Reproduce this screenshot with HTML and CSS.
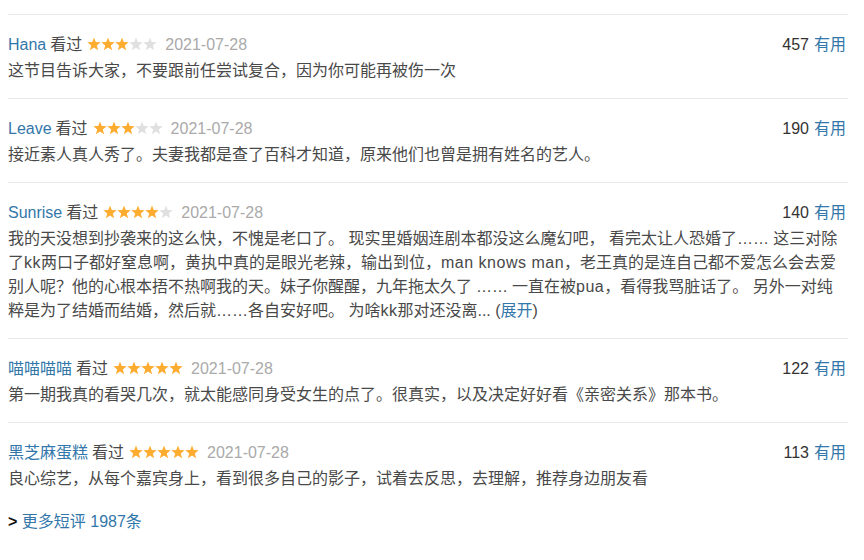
FILE: index.html
```html
<!DOCTYPE html>
<html lang="zh-CN">
<head>
<meta charset="utf-8">
<title>短评</title>
<link rel="stylesheet" href="styles.css">
</head>
<body>
<svg width="0" height="0" class="defs">
  <defs>
    <polygon id="st" points="7,0.5 8.75,5.1 13.66,5.34 9.8,8.45 11.11,13.3 7,10.55 2.89,13.3 4.2,8.45 0.34,5.34 5.25,5.1"/>
  </defs>
</svg>
<div class="comments">
  <div class="item">
    <div class="head">
      <div class="info">
        <a class="name">Hana</a><span class="seen">看过</span>
        <svg class="stars" viewBox="0 0 70 14"><use href="#st" class="on"/><use href="#st" x="14" class="on"/><use href="#st" x="28" class="on"/><use href="#st" x="42" class="off"/><use href="#st" x="56" class="off"/></svg>
        <span class="date">2021-07-28</span>
      </div>
      <div class="vote"><span class="num">457</span><a class="useful">有用</a></div>
    </div>
    <p class="text">这节目告诉大家，不要跟前任尝试复合，因为你可能再被伤一次</p>
  </div>
  <div class="item">
    <div class="head">
      <div class="info">
        <a class="name">Leave</a><span class="seen">看过</span>
        <svg class="stars" viewBox="0 0 70 14"><use href="#st" class="on"/><use href="#st" x="14" class="on"/><use href="#st" x="28" class="on"/><use href="#st" x="42" class="off"/><use href="#st" x="56" class="off"/></svg>
        <span class="date">2021-07-28</span>
      </div>
      <div class="vote"><span class="num">190</span><a class="useful">有用</a></div>
    </div>
    <p class="text">接近素人真人秀了。夫妻我都是查了百科才知道，原来他们也曾是拥有姓名的艺人。</p>
  </div>
  <div class="item">
    <div class="head">
      <div class="info">
        <a class="name">Sunrise</a><span class="seen">看过</span>
        <svg class="stars" viewBox="0 0 70 14"><use href="#st" class="on"/><use href="#st" x="14" class="on"/><use href="#st" x="28" class="on"/><use href="#st" x="42" class="on"/><use href="#st" x="56" class="off"/></svg>
        <span class="date">2021-07-28</span>
      </div>
      <div class="vote"><span class="num">140</span><a class="useful">有用</a></div>
    </div>
    <p class="text">我的天没想到抄袭来的这么快，不愧是老口了。 现实里婚姻连剧本都没这么魔幻吧， 看完太让人恐婚了…… 这三对除了<span class="lat">kk</span>两口子都好窒息啊，黄执中真的是眼光老辣，输出到位，<span class="lat">man knows man</span>，老王真的是连自己都不爱怎么会去爱别人呢？他的心根本捂不热啊我的天。妹子你醒醒，九年拖太久了<span class="dots">……</span>一直在被<span class="lat">pua</span>，看得我骂脏话了。 另外一对纯粹是为了结婚而结婚，然后就……各自安好吧。 为啥<span class="lat">kk</span>那对还没离... (<a class="more">展开</a>)</p>
  </div>
  <div class="item">
    <div class="head">
      <div class="info">
        <a class="name">喵喵喵喵</a><span class="seen">看过</span>
        <svg class="stars" viewBox="0 0 70 14"><use href="#st" class="on"/><use href="#st" x="14" class="on"/><use href="#st" x="28" class="on"/><use href="#st" x="42" class="on"/><use href="#st" x="56" class="on"/></svg>
        <span class="date">2021-07-28</span>
      </div>
      <div class="vote"><span class="num">122</span><a class="useful">有用</a></div>
    </div>
    <p class="text">第一期我真的看哭几次，就太能感同身受女生的点了。很真实，以及决定好好看《亲密关系》那本书。</p>
  </div>
  <div class="item last">
    <div class="head">
      <div class="info">
        <a class="name">黑芝麻蛋糕</a><span class="seen">看过</span>
        <svg class="stars" viewBox="0 0 70 14"><use href="#st" class="on"/><use href="#st" x="14" class="on"/><use href="#st" x="28" class="on"/><use href="#st" x="42" class="on"/><use href="#st" x="56" class="on"/></svg>
        <span class="date">2021-07-28</span>
      </div>
      <div class="vote"><span class="num">113</span><a class="useful">有用</a></div>
    </div>
    <p class="text">良心综艺，从每个嘉宾身上，看到很多自己的影子，试着去反思，去理解，推荐身边朋友看</p>
  </div>
  <div class="all"><span class="gt">&gt;</span> <a class="link">更多短评 1987条</a></div>
</div>
</body>
</html>
```
FILE: styles.css
```css
html, body {
  margin: 0;
  padding: 0;
  background: #fff;
}
body {
  font-family: "Liberation Sans", "Noto Sans CJK SC", sans-serif;
  color: #494949;
  font-size: 16px;
}
.defs {
  position: absolute;
  width: 0;
  height: 0;
}
.comments {
  margin: 14px 16px 0 8px;
}
.item {
  border-top: 1px solid #e9e9e9;
  padding: 18px 2px 15px 0;
}
.item.last {
  padding-bottom: 0;
}
.head {
  display: flex;
  justify-content: space-between;
  align-items: center;
  height: 24px;
  line-height: 24px;
  font-size: 16px;
}
.info {
  display: flex;
  align-items: center;
}
.name {
  color: #3377aa;
}
.seen {
  color: #494949;
  margin-left: 4px;
}
.stars {
  width: 70px;
  height: 14px;
  margin-left: 5px;
  margin-top: -2px;
}
.stars .on { fill: #fdac30; }
.stars .off { fill: #e0e0e0; }
.date {
  color: #aaaaaa;
  margin-left: 8px;
}
.vote .num {
  color: #333;
  margin-right: 5px;
}
.useful {
  color: #3377aa;
}
.text {
  margin: 2px 0 0;
  line-height: 24px;
  color: #494949;
}
.lat {
  letter-spacing: 0.5px;
}
.dots {
  margin: 0 4px 0 4px;
}
.more {
  color: #3377aa;
}
.all {
  margin-top: 19px;
  line-height: 24px;
  font-size: 16px;
}
.gt {
  color: #111;
  font-weight: bold;
}
.link {
  color: #3377aa;
}
```
